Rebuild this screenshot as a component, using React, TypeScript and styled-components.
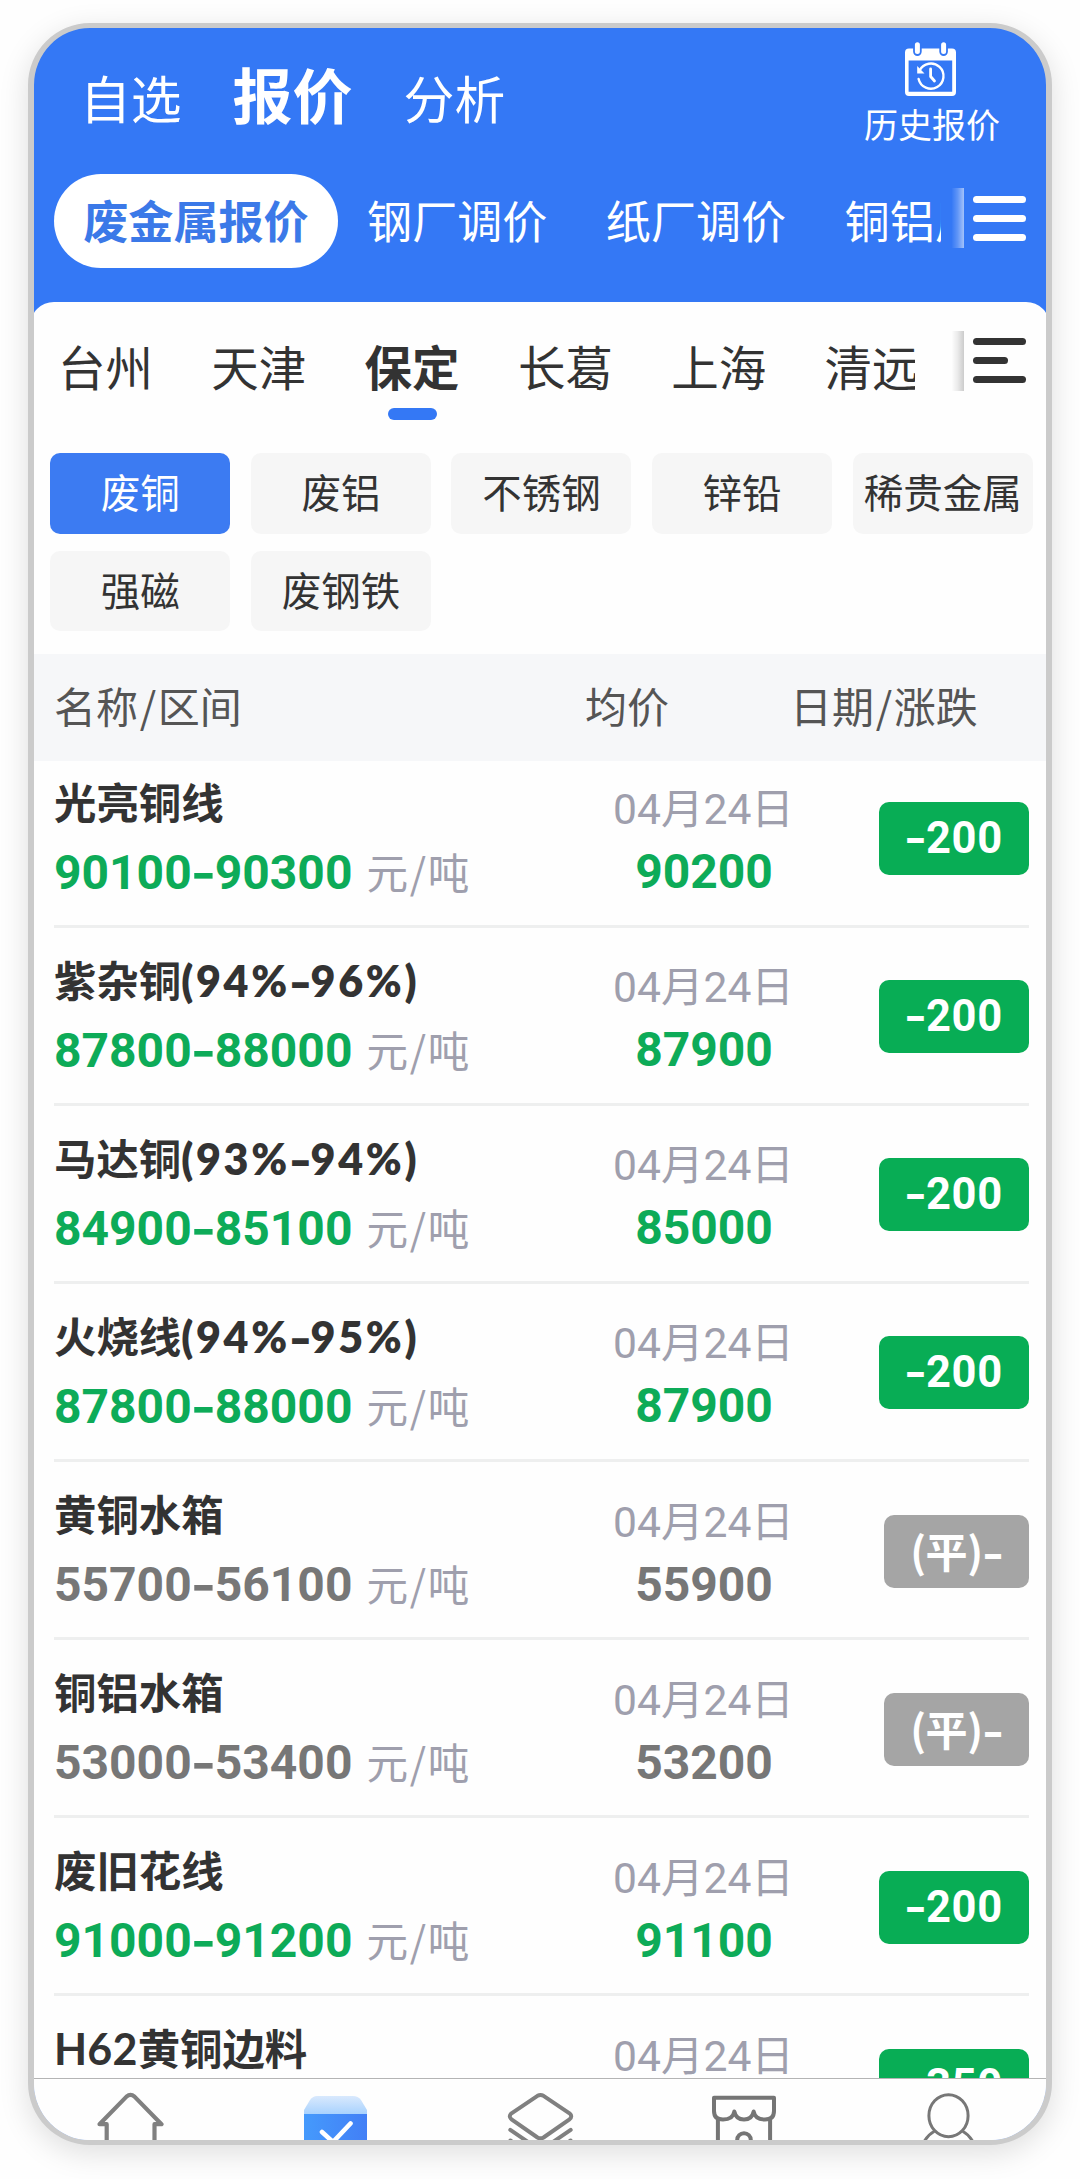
import React from "react";
import styled, { createGlobalStyle } from "styled-components";

const GlobalStyle = createGlobalStyle`
  * { box-sizing: border-box; }
  body {
    margin: 0;
    background: #fff;
    font-family: "Noto Sans CJK SC", sans-serif;
    color: #333;
  }
`;

const Page = styled.main`
  width: 1080px;
  height: 2179px;
  padding: 23px 28px 0;
  overflow: hidden;
  background: #fefefe;
`;

const Phone = styled.div`
  display: flex;
  flex-direction: column;
  width: 1024px;
  height: 2122px;
  border: solid #cbcbcb;
  border-width: 5px 6px;
  border-radius: 62px;
  overflow: hidden;
  background: #3478f5;
  box-shadow: 0 8px 30px rgba(0, 0, 0, 0.13);
`;

const TopBar = styled.header`
  display: flex;
  justify-content: space-between;
  height: 146px;
  padding: 14px 46px 0 46px;
  color: #fff;
`;

const Sections = styled.nav`
  display: flex;
  align-items: baseline;
  gap: 51px;
  height: 90px;
  padding-top: 8px;
  white-space: nowrap;
`;

const Section = styled.span<{ $active?: boolean }>`
  font-size: ${(p) => (p.$active ? 60 : 50.8)}px;
  font-weight: ${(p) => (p.$active ? 700 : 400)};
  line-height: 86px;
`;

const History = styled.div`
  display: flex;
  flex-direction: column;
  align-items: center;
  width: 136px;
  font-size: 34px;
  line-height: 40px;
  white-space: nowrap;

  svg { margin-right: 3px; }
  span { margin-top: 8px; }
`;

const Channels = styled.div`
  display: flex;
  height: 128px;
  padding-left: 20px;
  color: #fff;
`;

const ChannelList = styled.div`
  display: flex;
  width: 887px;
  overflow: hidden;
`;

const Channel = styled.div<{ $active?: boolean }>`
  flex: none;
  height: 94px;
  padding: 0 29.2px;
  border-radius: 47px;
  background: ${(p) => (p.$active ? "#fff" : "transparent")};
  color: ${(p) => (p.$active ? "#3b79e8" : "#fff")};
  font-size: 45.1px;
  font-weight: ${(p) => (p.$active ? 700 : 400)};
  line-height: 92px;
  white-space: nowrap;
`;

const Fade = styled.div<{ $rgb: string; $alpha: number; $top: number }>`
  width: 14px;
  height: 60px;
  margin: ${(p) => p.$top}px 9px 0 auto;
  background: linear-gradient(
    90deg,
    rgba(${(p) => p.$rgb}, 0) 10%,
    rgba(${(p) => p.$rgb}, ${(p) => p.$alpha * 0.4}) 55%,
    rgba(${(p) => p.$rgb}, ${(p) => p.$alpha})
  );
`;

const Burger = styled.div<{ $color: string; $top: number }>`
  display: flex;
  flex-direction: column;
  gap: 12px;
  width: 53px;
  margin: ${(p) => p.$top}px 20px 0 0;
  color: ${(p) => p.$color};
`;

const Bar = styled.i<{ $width?: number }>`
  width: ${(p) => p.$width ?? 53}px;
  height: 7px;
  border-radius: 4px;
  background: currentColor;
`;

const Sheet = styled.section`
  display: flex;
  flex-direction: column;
  flex: 1;
  min-height: 0;
  margin: 0 -4px;
  padding: 0 4px;
  border-radius: 24px 24px 0 0;
  overflow: hidden;
  background: #fefefe;
`;

const Cities = styled.div`
  display: flex;
  flex: none;
  height: 151px;
  padding-left: 24px;
`;

const CityList = styled.div`
  display: flex;
  gap: 58.3px;
  width: 857px;
  overflow: hidden;
`;

const City = styled.div<{ $active?: boolean }>`
  display: flex;
  flex: none;
  flex-direction: column;
  align-items: center;
  padding-top: 30px;
  font-size: 47.5px;
  font-weight: ${(p) => (p.$active ? 700 : 400)};
  line-height: 68px;
  white-space: nowrap;

  &::after {
    content: "";
    display: ${(p) => (p.$active ? "block" : "none")};
    width: 49px;
    height: 12px;
    margin-top: 8px;
    border-radius: 6px;
    background: #3478f5;
  }
`;

const Chips = styled.div`
  display: grid;
  flex: none;
  grid-template-columns: repeat(5, 180px);
  grid-auto-rows: 80.5px;
  gap: 17px 20.6px;
  height: 201px;
  padding-left: 16.3px;
`;

const Chip = styled.div<{ $active?: boolean }>`
  border-radius: 10px;
  background: ${(p) => (p.$active ? "#3c7bf2" : "#f6f6f6")};
  color: ${(p) => (p.$active ? "#fff" : "#333")};
  font-size: 39.5px;
  line-height: 76px;
  text-align: center;
  white-space: nowrap;
`;

const TableHead = styled.div`
  display: grid;
  flex: none;
  grid-template-columns: 531px 205px 1fr;
  height: 107px;
  padding-left: 20px;
  background: #f6f7f9;
  color: #555;
  font-size: 42px;
  line-height: 101px;
  white-space: nowrap;
`;

const Slash = styled.span`
  margin: 0 1.7px;
`;

const Viewport = styled.div`
  flex: 1;
  min-height: 0;
  overflow: hidden;
`;

const Rows = styled.div`
  margin-top: -11.5px;
`;

const Row = styled.div`
  display: grid;
  grid-template-columns: 540px 220px 1fr;
  height: 178.15px;
  margin: 0 17px 0 20px;
  border-bottom: 3px solid #eeefef;
`;

const NameCell = styled.div`
  padding-top: 20px;
  white-space: nowrap;
`;

const Name = styled.div`
  height: 70px;
  font-size: 42.4px;
  font-weight: 700;
  line-height: 61px;
`;

const Latin = styled.span<{ $tight?: boolean }>`
  font-family: Lato, "Noto Sans CJK SC", sans-serif;
  font-size: 43px;
  font-weight: ${(p) => (p.$tight ? 700 : 800)};
  letter-spacing: ${(p) => (p.$tight ? 0.2 : 2.7)}px;
`;

const Range = styled.div`
  display: flex;
  align-items: baseline;
  height: 62px;
  line-height: 62px;
`;

const Figure = styled.span<{ $flat?: boolean }>`
  color: ${(p) => (p.$flat ? "#777" : "#0dab58")};
  font-family: Roboto, "Noto Sans CJK SC", sans-serif;
  font-size: 48px;
  font-weight: 700;
`;

const Dash = styled.span`
  display: inline-block;
  width: 0.48em;
  font-family: Inter, sans-serif;
  letter-spacing: 0;
  line-height: 1;
  text-align: center;
  transform: translateY(0.03em) scaleX(1.15);
`;

const Unit = styled.span`
  margin-left: 14px;
  color: #9f9fad;
  font-size: 41.6px;
`;

const MeanCell = styled.div`
  display: flex;
  flex-direction: column;
  align-items: center;
  padding-top: 28.5px;
  white-space: nowrap;
`;

const DateText = styled.div`
  height: 63px;
  margin-right: 1px;
  color: #9f9fad;
  font-family: Roboto, "Noto Sans CJK SC", sans-serif;
  font-size: 42.6px;
  line-height: 62px;
`;

const Mean = styled(Figure)`
  height: 62px;
  line-height: 62px;
`;

const ChangeCell = styled.div`
  display: flex;
  align-items: center;
  justify-content: flex-end;
  padding-top: 3px;
`;

const Change = styled.div<{ $flat?: boolean }>`
  width: ${(p) => (p.$flat ? 145 : 150)}px;
  height: 73px;
  border-radius: 10px;
  background: ${(p) => (p.$flat ? "#a5a5a5" : "#08ad55")};
  color: #fff;
  font-family: ${(p) => (p.$flat ? "" : "Roboto, ")}"Noto Sans CJK SC", sans-serif;
  font-size: ${(p) => (p.$flat ? 42 : 43.5)}px;
  font-weight: 700;
  letter-spacing: ${(p) => (p.$flat ? -0.4 : 0.7)}px;
  line-height: ${(p) => (p.$flat ? 69 : 74)}px;
  text-align: center;
  white-space: nowrap;
`;

const TabBar = styled.footer`
  display: flex;
  flex: none;
  height: 62px;
  margin: 0 -9px;
  padding: 13px 4px 0 4px;
  border-top: 1px solid #b4b4b4;
  background: #fefefe;
  overflow: hidden;
`;

const Tab = styled.div`
  display: flex;
  flex: 1;
  justify-content: center;

  svg { flex: none; }
`;

const CalendarIcon = () => (
  <svg width="51" height="54" viewBox="0 0 51 54" fill="none">
    <path d="M4 6.5H47Q51 6.5 51 10.5V50Q51 54 47 54H4Q0 54 0 50V10.5Q0 6.5 4 6.5ZM3.6 18.5V49.8H47.2V18.5Z" fill="#fff" fillRule="evenodd" />
    <path d="M12.4 2.8V9.6M38.6 2.8V9.6" stroke="#3478f5" strokeWidth="8.6" strokeLinecap="round" />
    <path d="M12.4 2.8V9.6M38.6 2.8V9.6" stroke="#fff" strokeWidth="5" strokeLinecap="round" />
    <path d="M14.6 28.5A12.6 12.6 0 1 1 13.6 37" stroke="#fff" strokeWidth="2.4" strokeLinecap="round" />
    <path d="M12.2 24V31.5H19.5Z" fill="#fff" />
    <path d="M25.6 27V34.5L29.5 39" stroke="#fff" strokeWidth="2.8" strokeLinecap="round" strokeLinejoin="round" />
  </svg>
);

const HomeIcon = () => (
  <svg width="71" height="60" viewBox="1 1 71 60" fill="none" stroke="#808080" strokeWidth="4.2" strokeLinejoin="round">
    <path d="M11.7 61V33.2H4.5L31.5 5.6Q35.5 2.2 39.5 5.6L66.5 33.2H59.5V61" />
  </svg>
);

const PriceIcon = () => (
  <svg width="63" height="60" viewBox="0 -4 63 60" fill="none">
    <defs>
      <linearGradient id="lid" x1="0" y1="0" x2="0" y2="1">
        <stop stopColor="#d9e9fd" />
        <stop offset="1" stopColor="#a8d2fe" />
      </linearGradient>
      <linearGradient id="box" x1="0" y1="0" x2="1" y2="0">
        <stop stopColor="#459afc" />
        <stop offset="1" stopColor="#427ff6" />
      </linearGradient>
    </defs>
    <path d="M0 14L6 4Q9 0 13 0H49Q54 0 57 4L63 14V18H0Z" fill="url(#lid)" />
    <path d="M0 18H63V60H0Z" fill="url(#box)" />
    <path d="M18 36L29 46L46.5 27.5" stroke="#fff" strokeWidth="4.6" strokeLinecap="round" strokeLinejoin="round" />
  </svg>
);

const LayersIcon = () => (
  <svg width="69" height="60" viewBox="0 1 69 60" fill="none" stroke="#808080" strokeWidth="4" strokeLinecap="round" strokeLinejoin="round">
    <path d="M31.5 4.8Q34.5 3.2 37.5 4.8L63.5 22.3Q67 25.3 63.5 28.3L37.5 46.5Q34.5 48.2 31.5 46.5L5.5 28.3Q2 25.3 5.5 22.3Z" />
    <path d="M4.3 38.8L30 56.5Q34.5 59 39 56.5L64.7 38.8M4.3 49.5L20 60M64.7 49.5L49 60" />
  </svg>
);

const ShopIcon = () => (
  <svg width="68" height="60" viewBox="0 1 68 60" fill="none" stroke="#757575" strokeWidth="4" strokeLinecap="round" strokeLinejoin="round">
    <path d="M4 6.7H64V20Q64 28.5 55 28.5Q45 28.5 43.7 20.5Q42 28.5 34 28.5Q26 28.5 24.3 20.5Q23 28.5 13 28.5Q4 28.5 4 20Z" />
    <path d="M7.9 28V62M60.1 28V62M27.2 62V49A6.8 6.8 0 0 1 40.8 49V62" />
  </svg>
);

const UserIcon = () => (
  <svg width="61" height="60" viewBox="0 1 61 60" fill="none" stroke="#777" strokeWidth="3">
    <ellipse cx="30.5" cy="24.7" rx="19.6" ry="21" />
    <path d="M16.3 40.3Q8 45 3.5 56M44.7 40.3Q53 45 57.5 56" />
  </svg>
);

type Quote = {
  prefix?: string;
  name: string;
  purity?: [string, string];
  low: string;
  high: string;
  mean: string;
  change: string;
  flat?: boolean;
};

const quotes: Quote[] = [
  { name: "光亮铜线", low: "90100", high: "90300", mean: "90200", change: "200" },
  { name: "紫杂铜", purity: ["94%", "96%"], low: "87800", high: "88000", mean: "87900", change: "200" },
  { name: "马达铜", purity: ["93%", "94%"], low: "84900", high: "85100", mean: "85000", change: "200" },
  { name: "火烧线", purity: ["94%", "95%"], low: "87800", high: "88000", mean: "87900", change: "200" },
  { name: "黄铜水箱", low: "55700", high: "56100", mean: "55900", change: "(平)", flat: true },
  { name: "铜铝水箱", low: "53000", high: "53400", mean: "53200", change: "(平)", flat: true },
  { name: "废旧花线", low: "91000", high: "91200", mean: "91100", change: "200" },
  { prefix: "H62", name: "黄铜边料", low: "", high: "", mean: "", change: "350" },
];

const channels = ["废金属报价", "钢厂调价", "纸厂调价", "铜铝厂调价"];
const cities = ["台州", "天津", "保定", "长葛", "上海", "清远"];
const metals = ["废铜", "废铝", "不锈钢", "锌铅", "稀贵金属", "强磁", "废钢铁"];

function QuoteRow({ quote }: { quote: Quote }) {
  return (
    <Row>
      <NameCell>
        <Name>
          {quote.prefix && <Latin $tight>{quote.prefix}</Latin>}
          {quote.name}
          {quote.purity && (
            <Latin>
              ({quote.purity[0]}
              <Dash>-</Dash>
              {quote.purity[1]})
            </Latin>
          )}
        </Name>
        {quote.low && (
          <Range>
            <Figure $flat={quote.flat}>
              {quote.low}
              <Dash>-</Dash>
              {quote.high}
            </Figure>
            <Unit>
              元<Slash>/</Slash>吨
            </Unit>
          </Range>
        )}
      </NameCell>
      <MeanCell>
        <DateText>04月24日</DateText>
        <Mean $flat={quote.flat}>{quote.mean}</Mean>
      </MeanCell>
      <ChangeCell>
        {quote.flat ? (
          <Change $flat>
            {quote.change}
            <Dash>-</Dash>
          </Change>
        ) : (
          <Change>
            <Dash>-</Dash>
            {quote.change}
          </Change>
        )}
      </ChangeCell>
    </Row>
  );
}

export default function App() {
  return (
    <Page>
      <GlobalStyle />
      <Phone>
        <TopBar>
          <Sections>
            <Section>自选</Section>
            <Section $active>报价</Section>
            <Section>分析</Section>
          </Sections>
          <History>
            <CalendarIcon />
            <span>历史报价</span>
          </History>
        </TopBar>
        <Channels>
          <ChannelList>
            {channels.map((c, i) => (
              <Channel key={c} $active={i === 0}>{c}</Channel>
            ))}
          </ChannelList>
          <Fade $rgb="255, 255, 255" $alpha={0.55} $top={14} />
          <Burger $color="#fff" $top={22}>
            <Bar />
            <Bar />
            <Bar />
          </Burger>
        </Channels>
        <Sheet>
          <Cities>
            <CityList>
              {cities.map((c) => (
                <City key={c} $active={c === "保定"}>{c}</City>
              ))}
            </CityList>
            <Fade $rgb="0, 0, 0" $alpha={0.2} $top={29} />
            <Burger $color="#333" $top={36}>
              <Bar />
              <Bar $width={35} />
              <Bar />
            </Burger>
          </Cities>
          <Chips>
            {metals.map((m, i) => (
              <Chip key={m} $active={i === 0}>{m}</Chip>
            ))}
          </Chips>
          <TableHead>
            <span>名称<Slash>/</Slash>区间</span>
            <span>均价</span>
            <span>日期<Slash>/</Slash>涨跌</span>
          </TableHead>
          <Viewport>
            <Rows>
              {quotes.map((q) => (
                <QuoteRow key={q.name} quote={q} />
              ))}
            </Rows>
          </Viewport>
          <TabBar>
            <Tab><HomeIcon /></Tab>
            <Tab><PriceIcon /></Tab>
            <Tab><LayersIcon /></Tab>
            <Tab><ShopIcon /></Tab>
            <Tab><UserIcon /></Tab>
          </TabBar>
        </Sheet>
      </Phone>
    </Page>
  );
}
